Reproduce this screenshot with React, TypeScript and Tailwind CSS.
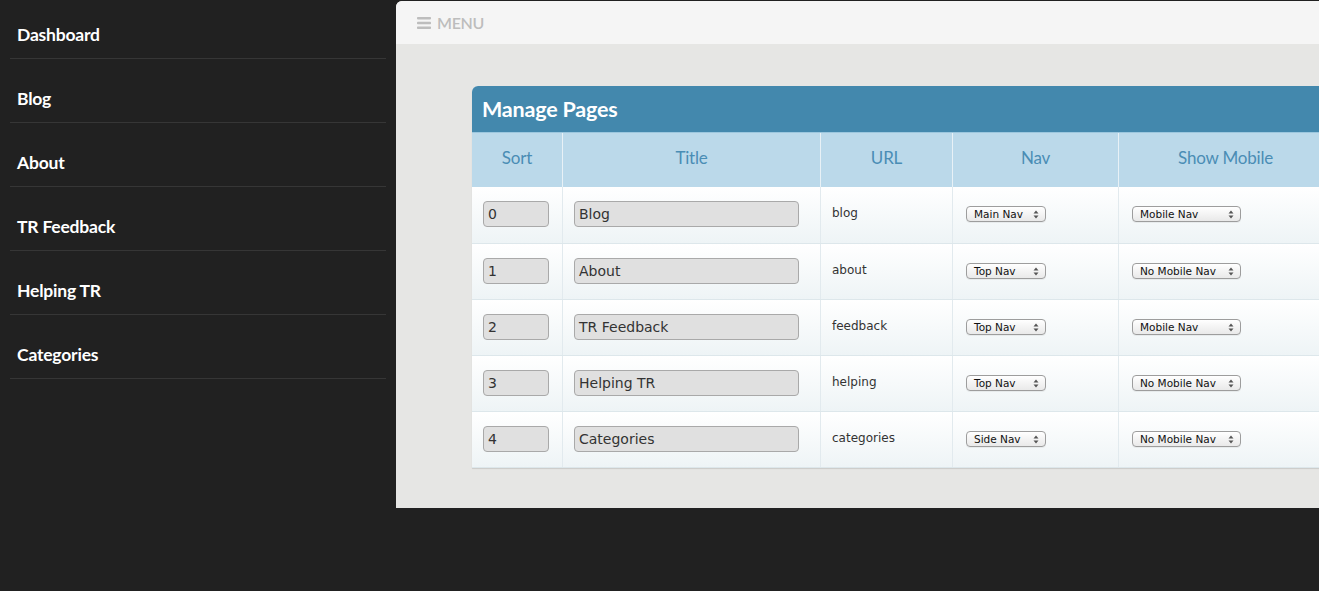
const navItems = ["Dashboard", "Blog", "About", "TR Feedback", "Helping TR", "Categories"];

const pages = [
  { sort: "0", title: "Blog", url: "blog", nav: "Main Nav", mobile: "Mobile Nav" },
  { sort: "1", title: "About", url: "about", nav: "Top Nav", mobile: "No Mobile Nav" },
  { sort: "2", title: "TR Feedback", url: "feedback", nav: "Top Nav", mobile: "Mobile Nav" },
  { sort: "3", title: "Helping TR", url: "helping", nav: "Top Nav", mobile: "No Mobile Nav" },
  { sort: "4", title: "Categories", url: "categories", nav: "Side Nav", mobile: "No Mobile Nav" },
];

const cols = ["w-[90px]", "w-[258px]", "w-[132px]", "w-[166px]", "w-[214px]"];

const FakeSelect = ({ value, width }: { value: string; width: string }) => (
  <div
    className={`${width} h-[16px] flex items-center justify-between pl-[7px] pr-[6px] rounded-[4px] border border-[#9d9d9d] bg-gradient-to-b from-white to-[#e9e9e9] shadow-[0_1px_0_rgba(0,0,0,0.05)] text-[10.5px] text-[#111] font-['DejaVu_Sans',sans-serif] leading-none`}
  >
    <span>{value}</span>
    <svg width="6" height="9" viewBox="0 0 6 9" className="shrink-0">
      <path d="M3 0.5 L5.5 3.5 H0.5 Z" fill="#555" />
      <path d="M3 8.5 L5.5 5.5 H0.5 Z" fill="#555" />
    </svg>
  </div>
);

export default function App() {
  return (
    <div className="w-[1319px] h-[591px] overflow-hidden bg-[#212121] flex font-['Lato',sans-serif]">
      <aside className="w-[396px] shrink-0 px-[10px] -mt-[5px]">
        {navItems.map((item) => (
          <div
            key={item}
            className="h-[64px] pt-[28px] pl-[7px] border-b border-[#363636] text-white text-[17.5px] font-bold leading-[24px] tracking-[-0.2px]"
          >
            {item}
          </div>
        ))}
      </aside>

      <main className="mt-[1px] h-[507px] w-[940px] shrink-0 rounded-tl-[6px] bg-[#e6e6e4] overflow-hidden">
        <div className="h-[43px] bg-[#f5f5f5] flex items-center pl-[21px] gap-[6px] text-[#bdbdbd]">
          <svg width="14" height="12" viewBox="0 0 14 12">
            <rect x="0" y="0" width="14" height="2.4" rx="0.8" fill="#bdbdbd" />
            <rect x="0" y="4.8" width="14" height="2.4" rx="0.8" fill="#bdbdbd" />
            <rect x="0" y="9.6" width="14" height="2.4" rx="0.8" fill="#bdbdbd" />
          </svg>
          <span className="text-[16px] font-semibold tracking-[-0.3px]">MENU</span>
        </div>

        <div className="pt-[42px] pl-[76px]">
          <div className="w-[880px] rounded-t-[6px] overflow-hidden bg-white shadow-[0_1px_1px_rgba(0,0,0,0.12)]">
            <div className="h-[47px] bg-[#4388ad] flex items-center pl-[10px] border-b border-[#9cc7de]">
              <h1 className="text-white text-[21.5px] font-bold tracking-[-0.2px]">Manage Pages</h1>
            </div>
            <div className="flex h-[54px] bg-[#bbd9ea] text-[#4a8db5] text-[17px]">
              {["Sort", "Title", "URL", "Nav", "Show Mobile"].map((h, i) => (
                <div
                  key={h}
                  className={`${cols[i]} shrink-0 flex items-center justify-center pb-[4px] tracking-[-0.2px] ${i > 0 ? "border-l border-[#e8f1f6]" : ""}`}
                >
                  {h}
                </div>
              ))}
            </div>
            {pages.map((p, idx) => (
              <div
                key={p.sort}
                className={`flex h-[56px] bg-gradient-to-b from-white to-[#eef4f6] font-['DejaVu_Sans',sans-serif] ${idx > 0 ? "border-t border-[#dde7eb]" : ""}`}
              >
                <div className={`${cols[0]} shrink-0 pl-[11px] pt-[14px]`}>
                  <div className="w-[66px] h-[26px] rounded-[4px] border border-[#a9a9a9] bg-[#e0e0e0] pl-[4px] flex items-center text-[14px] text-[#333]">
                    {p.sort}
                  </div>
                </div>
                <div className={`${cols[1]} shrink-0 pl-[11px] pt-[14px] border-l border-[#e2eaee]`}>
                  <div className="w-[225px] h-[26px] rounded-[4px] border border-[#a9a9a9] bg-[#e0e0e0] pl-[4px] flex items-center text-[14px] text-[#333]">
                    {p.title}
                  </div>
                </div>
                <div className={`${cols[2]} shrink-0 pl-[11px] pt-[17px] border-l border-[#e2eaee] text-[12px] text-[#333]`}>
                  {p.url}
                </div>
                <div className={`${cols[3]} shrink-0 pl-[13px] pt-[19px] border-l border-[#e2eaee]`}>
                  <FakeSelect value={p.nav} width="w-[80px]" />
                </div>
                <div className={`${cols[4]} shrink-0 pl-[13px] pt-[19px] border-l border-[#e2eaee]`}>
                  <FakeSelect value={p.mobile} width="w-[109px]" />
                </div>
              </div>
            ))}
            <div className="h-px bg-[#dde7eb]" />
          </div>
        </div>
      </main>
    </div>
  );
}
